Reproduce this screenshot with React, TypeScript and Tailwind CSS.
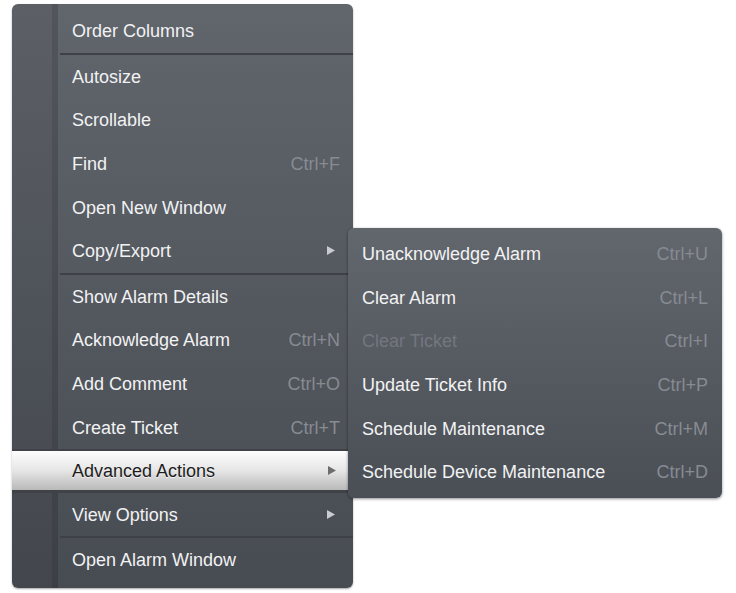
type Item = {
  label: string;
  shortcut?: string;
  arrow?: boolean;
  active?: boolean;
  disabled?: boolean;
};

const groups: Item[][] = [
  [{ label: "Order Columns" }],
  [
    { label: "Autosize" },
    { label: "Scrollable" },
    { label: "Find", shortcut: "Ctrl+F" },
    { label: "Open New Window" },
    { label: "Copy/Export", arrow: true },
  ],
  [
    { label: "Show Alarm Details" },
    { label: "Acknowledge Alarm", shortcut: "Ctrl+N" },
    { label: "Add Comment", shortcut: "Ctrl+O" },
    { label: "Create Ticket", shortcut: "Ctrl+T" },
    { label: "Advanced Actions", arrow: true, active: true },
    { label: "View Options", arrow: true },
  ],
  [{ label: "Open Alarm Window" }],
];

const subItems: Item[] = [
  { label: "Unacknowledge Alarm", shortcut: "Ctrl+U" },
  { label: "Clear Alarm", shortcut: "Ctrl+L" },
  { label: "Clear Ticket", shortcut: "Ctrl+I", disabled: true },
  { label: "Update Ticket Info", shortcut: "Ctrl+P" },
  { label: "Schedule Maintenance", shortcut: "Ctrl+M" },
  { label: "Schedule Device Maintenance", shortcut: "Ctrl+D" },
];

function Arrow({ dark }: { dark?: boolean }) {
  return (
    <svg width="8" height="9" viewBox="0 0 8 9" className="mr-[5px]">
      <path d="M0 0 L8 4.5 L0 9 Z" fill={dark ? "#6d6d6d" : "#c9cbce"} />
    </svg>
  );
}

function MainRow({ item }: { item: Item }) {
  if (item.active) {
    return (
      <div className="relative h-[43.6px] -ml-[46px] mr-[-5px] flex items-center border-t-2 border-b-[3px] border-[#3f4247] bg-gradient-to-b from-[#fdfdfd] via-[#e6e6e6] to-[#b9b9b9] pl-[60px] pr-[17px]">
        <span className="flex-1 pt-[2px] text-[#1d1d1d] [text-shadow:0_1px_0_rgba(255,255,255,0.7)]">
          {item.label}
        </span>
        {item.arrow && <Arrow dark />}
      </div>
    );
  }
  return (
    <div className="h-[43.6px] flex items-center pl-[14px] pr-[13px]">
      <span className="flex-1 pt-[2px] text-[#f1f2f3]">{item.label}</span>
      {item.shortcut && <span className="pt-[2px] text-[#878b92]">{item.shortcut}</span>}
      {item.arrow && <Arrow />}
    </div>
  );
}

export default function App() {
  return (
    <div className="relative h-[593px] w-[736px] overflow-hidden bg-white font-['Liberation_Sans',Arial,sans-serif] text-[18px]">
      <div className="ml-[12px] mt-[4px] flex h-[584px] w-[341px] overflow-hidden rounded-[6px] bg-gradient-to-b from-[#61656c] to-[#474b52] shadow-[0_1px_2px_rgba(0,0,0,0.35)]">
        <div className="w-[40px] shrink-0 bg-black/5" />
        <div className="w-[6px] shrink-0 bg-black/15" />
        <div className="flex-1 pt-[5px]">
          {groups.map((g, gi) => (
            <div key={gi}>
              {gi > 0 && <div className="ml-[2px] h-[2px] bg-[#3e4146]" />}
              {g.map((item) => (
                <MainRow key={item.label} item={item} />
              ))}
            </div>
          ))}
        </div>
      </div>

      <div className="absolute left-[348px] top-[228px] w-[374px] rounded-[6px] bg-gradient-to-b from-[#62666d] to-[#4a4e55] py-[4px] shadow-[0_1px_3px_rgba(0,0,0,0.45)]">
        {subItems.map((item) => (
          <div key={item.label} className="flex h-[43.6px] items-center pl-[14px] pr-[14px] pt-[2px]">
            <span className={`flex-1 ${item.disabled ? "text-[#737780]" : "text-[#f1f2f3]"}`}>
              {item.label}
            </span>
            <span className="text-[#878b92]">{item.shortcut}</span>
          </div>
        ))}
      </div>
    </div>
  );
}
